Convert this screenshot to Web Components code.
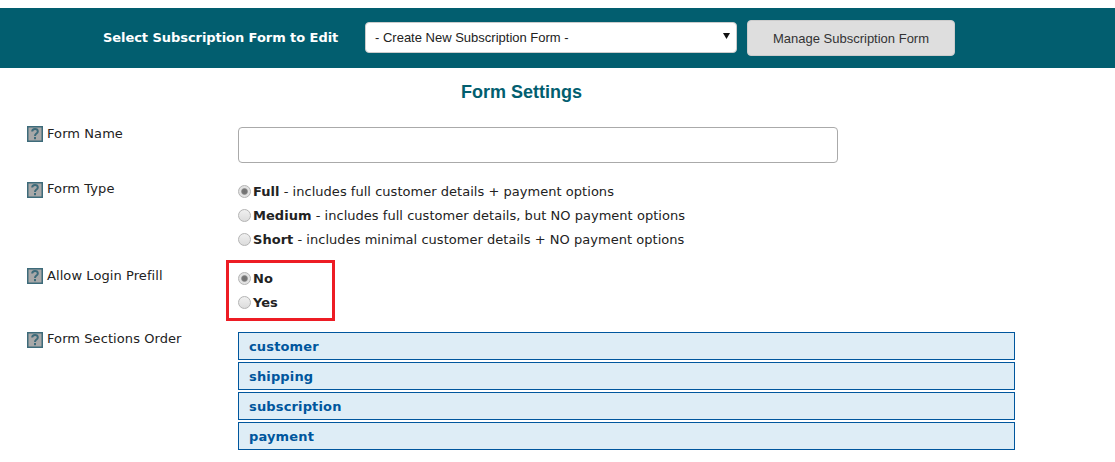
<!DOCTYPE html>
<html>
<head>
<meta charset="utf-8">
<title>Form Settings</title>
<style>
    html, body { margin: 0; padding: 0; background: #fff; }
    body { font-family: "DejaVu Sans", sans-serif; font-size: 13px; color: #111; overflow: hidden; }
</style>
</head>
<body>
<sub-bar></sub-bar>
<form-settings>
    <form-row label="Form Name">
        <text-field></text-field>
    </form-row>
    <form-row label="Form Type" raised>
        <radio-group style="margin: -3px 0 17px">
            <radio-option checked name="type"><b>Full</b> - includes full customer details + payment options</radio-option>
            <radio-option name="type"><b>Medium</b> - includes full customer details, but NO payment options</radio-option>
            <radio-option name="type"><b>Short</b> - includes minimal customer details + NO payment options</radio-option>
        </radio-group>
    </form-row>
    <form-row label="Allow Login Prefill">
        <red-box>
            <radio-group>
                <radio-option checked name="prefill"><b>No</b></radio-option>
                <radio-option name="prefill"><b>Yes</b></radio-option>
            </radio-group>
        </red-box>
    </form-row>
    <form-row label="Form Sections Order" raised>
        <section-list>
            <section-item>customer</section-item>
            <section-item>shipping</section-item>
            <section-item>subscription</section-item>
            <section-item>payment</section-item>
        </section-list>
    </form-row>
</form-settings>

<script>
class SubBar extends HTMLElement {
    constructor(){
        super();
        this.attachShadow({ mode: 'open' });
        this.shadowRoot.innerHTML = `
            <style>
                :host { display: block; padding-top: 8px; }
                #bar {
                    display: flex;
                    align-items: center;
                    height: 60px;
                    padding-left: 103px;
                    box-sizing: border-box;
                    background: #025e6f;
                }
                label {
                    width: 262px;
                    margin-top: -2px;
                    color: #fff;
                    letter-spacing: -0.06px;
                    font: bold 13px "DejaVu Sans", sans-serif;
                }
                #select {
                    display: flex;
                    align-items: center;
                    justify-content: space-between;
                    width: 372px;
                    height: 31px;
                    margin-top: -1px;
                    padding: 0 6px 0 9px;
                    box-sizing: border-box;
                    background: #fff;
                    border: 1px solid #ccc;
                    border-radius: 4px;
                    color: #222;
                    font: 13px "Liberation Sans", sans-serif;
                }
                #select svg { margin-top: -3px; }
                button {
                    width: 208px;
                    height: 36px;
                    margin-left: 10px;
                    padding: 0;
                    background: #dedede;
                    border: 1px solid #ccc;
                    border-radius: 4px;
                    color: #333;
                    font: 13px "Liberation Sans", sans-serif;
                }
            </style>
            <div id="bar">
                <label>Select Subscription Form to Edit</label>
                <div id="select">
                    <span>- Create New Subscription Form -</span>
                    <svg width="7" height="6" viewBox="0 0 7 6"><path d="M0 0h7L3.5 6z" fill="#111"/></svg>
                </div>
                <button type="button">Manage Subscription Form</button>
            </div>
        `;
    }
}
window.customElements.define('sub-bar', SubBar);

class FormSettings extends HTMLElement {
    constructor(){
        super();
        this.attachShadow({ mode: 'open' });
        this.shadowRoot.innerHTML = `
            <style>
                :host { display: block; }
                h2 {
                    margin: 0;
                    padding: 14px 72px 0 0;
                    height: 45px;
                    box-sizing: border-box;
                    text-align: center;
                    color: #025e6f;
                    font: bold 18px/20px "Liberation Sans", sans-serif;
                }
                #rows { display: flex; flex-direction: column; padding-top: 13px; }
            </style>
            <h2>Form Settings</h2>
            <div id="rows"><slot></slot></div>
        `;
    }
}
window.customElements.define('form-settings', FormSettings);

class FormRow extends HTMLElement {
    constructor(){
        super();
        this.attachShadow({ mode: 'open' });
        this.shadowRoot.innerHTML = `
            <style>
                :host { display: flex; padding-left: 27px; }
                #label {
                    display: flex;
                    align-items: flex-start;
                    gap: 4px;
                    width: 211px;
                    flex: none;
                    line-height: 15px;
                    color: #222;
                    letter-spacing: 0.08px;
                }
                :host([raised]) #text { margin-top: -1px; }
                #field { flex: none; }
                svg { display: block; flex: none; }
            </style>
            <div id="label">
                <svg width="16" height="16" viewBox="0 0 16 16">
                    <rect x="0.75" y="0.75" width="14.5" height="14.5" fill="#a8a8a8" stroke="#3d6b7a" stroke-width="1.5"/>
                    <path d="M5.2 5.6C5.2 3.9 6.4 3 8 3s2.8.9 2.8 2.4c0 2.2-2.8 2.2-2.8 4.6" fill="none" stroke="#3d6b7a" stroke-width="2"/>
                    <rect x="7" y="11" width="2" height="2.2" fill="#3d6b7a"/>
                </svg>
                <span id="text"></span>
            </div>
            <div id="field"><slot></slot></div>
        `;
    }
    connectedCallback(){
        this.shadowRoot.getElementById('text').textContent = this.getAttribute('label');
    }
}
window.customElements.define('form-row', FormRow);

class TextField extends HTMLElement {
    constructor(){
        super();
        this.attachShadow({ mode: 'open' });
        this.shadowRoot.innerHTML = `
            <style>
                :host { display: block; padding: 1px 0 19px; }
                input {
                    display: block;
                    width: 600px;
                    height: 36px;
                    box-sizing: border-box;
                    background: #fff;
                    border: 1px solid #aaa;
                    border-radius: 4px;
                    outline: none;
                }
            </style>
            <input type="text">
        `;
    }
}
window.customElements.define('text-field', TextField);

class RadioGroup extends HTMLElement {
    constructor(){
        super();
        this.attachShadow({ mode: 'open' });
        this.shadowRoot.innerHTML = `
            <style>
                :host { display: flex; flex-direction: column; }
            </style>
            <slot></slot>
        `;
    }
}
window.customElements.define('radio-group', RadioGroup);

class RadioOption extends HTMLElement {
    constructor(){
        super();
        this.attachShadow({ mode: 'open' });
        this.shadowRoot.innerHTML = `
            <style>
                :host {
                    display: flex;
                    align-items: center;
                    height: 24px;
                    margin-left: -0.5px;
                    color: #222;
                    letter-spacing: 0.03px;
                    white-space: nowrap;
                }
                input {
                    appearance: none;
                    width: 13px;
                    height: 13px;
                    margin: 0 2.5px 0 0;
                    flex: none;
                    box-sizing: border-box;
                    border: 1px solid #b4b4b4;
                    border-radius: 50%;
                    background: linear-gradient(#f0f0f0, #dcdcdc);
                }
                input:checked {
                    background: radial-gradient(circle, #707070 0, #787878 2.6px, #e2e2e2 3.8px);
                }
            </style>
            <input type="radio"><span><slot></slot></span>
        `;
    }
    connectedCallback(){
        const input = this.shadowRoot.querySelector('input');
        input.checked = this.hasAttribute('checked');
        input.name = this.getAttribute('name');
    }
}
window.customElements.define('radio-option', RadioOption);

class RedBox extends HTMLElement {
    constructor(){
        super();
        this.attachShadow({ mode: 'open' });
        this.shadowRoot.innerHTML = `
            <style>
                :host {
                    display: block;
                    width: 109px;
                    height: 61px;
                    margin: -8px 0 11px -12px;
                    padding: 3px 0 0 9px;
                    box-sizing: border-box;
                    border: 3px solid #ed1c24;
                }
            </style>
            <slot></slot>
        `;
    }
}
window.customElements.define('red-box', RedBox);

class SectionList extends HTMLElement {
    constructor(){
        super();
        this.attachShadow({ mode: 'open' });
        this.shadowRoot.innerHTML = `
            <style>
                :host { display: flex; flex-direction: column; gap: 2px; width: 777px; }
            </style>
            <slot></slot>
        `;
    }
}
window.customElements.define('section-list', SectionList);

class SectionItem extends HTMLElement {
    constructor(){
        super();
        this.attachShadow({ mode: 'open' });
        this.shadowRoot.innerHTML = `
            <style>
                :host {
                    display: flex;
                    align-items: center;
                    height: 28px;
                    padding-left: 10px;
                    box-sizing: border-box;
                    background: #deedf6;
                    border: 1px solid #00569d;
                    color: #00569d;
                    font-weight: bold;
                    letter-spacing: 0.15px;
                }
            </style>
            <slot></slot>
        `;
    }
}
window.customElements.define('section-item', SectionItem);
</script>
</body>
</html>
